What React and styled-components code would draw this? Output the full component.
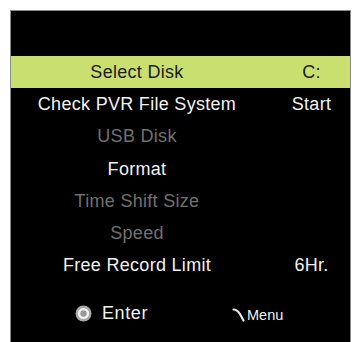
import React from 'react'
import styled, {createGlobalStyle} from 'styled-components'

const Global = createGlobalStyle`
    html, body {
        margin: 0;
        padding: 0;
        background: #ffffff;
        overflow: hidden;
    }
    body {
        font-family: "Liberation Sans", Arial, sans-serif;
    }
`;

const Page = styled.div`
    width: 354px;
    height: 342px;
    padding: 10px 0 0 10px;
    box-sizing: border-box;
    overflow: hidden;
`;

const Screen = styled.div`
    width: 341px;
    height: 360px;
    background: #000000;
    border: 1px solid #8a8a8a;
    box-sizing: border-box;
    padding-top: 45px;
    display: flex;
    flex-direction: column;
`;

const Row = styled.div`
    height: 32.3px;
    display: grid;
    grid-template-columns: 252px 1fr;
    align-items: center;
    font-size: 18px;
    letter-spacing: 0.3px;
    background: ${props => props.selected ? '#c9df6f' : 'transparent'};
    color: ${props => props.selected ? '#1c1c1c' : props.dim ? '#707070' : '#f2f2f2'};
`;

const Label = styled.span`
    text-align: center;
`;

const Value = styled.span`
    text-align: center;
    padding-left: 10px;
`;

const Footer = styled.div`
    margin-top: 15px;
    height: 32px;
    display: flex;
    align-items: center;
    color: #f0f0f0;
`;

const EnterKey = styled.div`
    display: flex;
    align-items: center;
    gap: 10px;
    margin-left: 64px;
    font-size: 18px;
    letter-spacing: 0.6px;
`;

const MenuKey = styled.div`
    display: flex;
    align-items: center;
    gap: 1px;
    margin-left: 84px;
    font-size: 14.5px;
    padding-top: 3px;
`;

const rows = [
    {label: 'Select Disk', value: 'C:', selected: true},
    {label: 'Check PVR File System', value: 'Start'},
    {label: 'USB Disk', dim: true},
    {label: 'Format'},
    {label: 'Time Shift Size', dim: true},
    {label: 'Speed', dim: true},
    {label: 'Free Record Limit', value: '6Hr.'},
]

function EnterIcon() {
    return (
        <svg width="17" height="17" viewBox="0 0 17 17">
            <circle cx="8.5" cy="8.5" r="8" fill="#a9a9a9" />
            <circle cx="8.5" cy="8.5" r="5.6" fill="#f2f2f2" />
            <circle cx="8.5" cy="8.5" r="3.2" fill="#9a9a9a" />
        </svg>
    )
}

function MenuIcon() {
    return (
        <svg width="14" height="14" viewBox="0 0 14 14">
            <path d="M1.5 1.5 C4 1.5 6 3 8 6 L11.5 12.5" stroke="#e8e8e8" strokeWidth="2.2" fill="none" strokeLinecap="round" />
        </svg>
    )
}

export default function App() {
    return (
        <Page>
            <Global />
            <Screen>
                {rows.map(r => (
                    <Row key={r.label} selected={r.selected} dim={r.dim}>
                        <Label>{r.label}</Label>
                        <Value>{r.value}</Value>
                    </Row>
                ))}
                <Footer>
                    <EnterKey>
                        <EnterIcon />
                        <span>Enter</span>
                    </EnterKey>
                    <MenuKey>
                        <MenuIcon />
                        <span>Menu</span>
                    </MenuKey>
                </Footer>
            </Screen>
        </Page>
    )
}
